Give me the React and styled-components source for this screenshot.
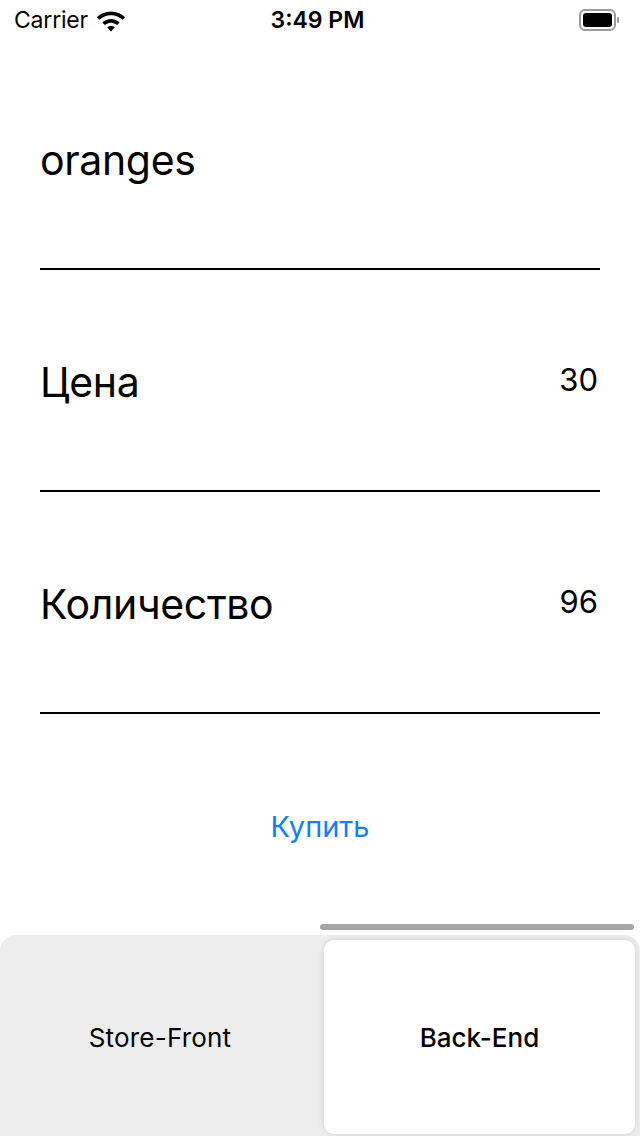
import React, { useState } from "react";
import styled, { createGlobalStyle } from "styled-components";

const GlobalStyle = createGlobalStyle`
  html, body {
    margin: 0;
    padding: 0;
    background: #ffffff;
  }
  body {
    font-family: Inter, "Noto Sans", "Liberation Sans", sans-serif;
    color: #000;
  }
`;

const Screen = styled.div`
  width: 640px;
  height: 1136px;
  display: flex;
  flex-direction: column;
  background: #fff;
  overflow: hidden;
`;

const StatusBar = styled.div`
  height: 40px;
  display: grid;
  grid-template-columns: 1fr auto 1fr;
  align-items: center;
  padding: 0 19px 0 14px;
  font-size: 23px;
`;

const Carrier = styled.div`
  display: flex;
  align-items: center;
  gap: 7px;
  letter-spacing: -0.2px;
`;

const Clock = styled.div`
  font-weight: 600;
`;

const BatteryWrap = styled.div`
  justify-self: end;
  display: flex;
  align-items: center;
`;

const Form = styled.div`
  padding: 8px 40px 0;
  display: flex;
  flex-direction: column;
`;

const Row = styled.div`
  height: 222px;
  border-bottom: 2px solid #000;
  display: flex;
  align-items: center;
  justify-content: space-between;
  padding: 3px 2px 0 0;
  box-sizing: border-box;
`;

const Label = styled.div`
  font-size: 41px;
  letter-spacing: -0.35px;
`;

const Value = styled.div`
  font-size: 31px;
  margin-top: -4px;
`;

const BuyWrap = styled.div`
  margin-top: 90px;
  height: 44px;
  display: flex;
  justify-content: center;
  align-items: center;
`;

const BuyButton = styled.button`
  border: none;
  background: none;
  font-family: inherit;
  font-size: 29px;
  color: #147efb;
  padding: 0 10px;
  cursor: pointer;
`;

const TabArea = styled.div`
  margin-top: auto;
  display: flex;
  flex-direction: column;
  gap: 5px;
`;

const IndicatorTrack = styled.div`
  height: 6px;
  padding: 0 6px 0 320px;
`;

const Indicator = styled.div`
  height: 100%;
  border-radius: 3px;
  background: #a6a6a6;
`;

const TabBar = styled.div`
  height: 201px;
  box-sizing: border-box;
  background: #ededed;
  border-radius: 16px 16px 0 0;
  display: grid;
  grid-template-columns: 320px 1fr;
  column-gap: 4px;
  padding: 5px 5px 2px 0;
`;

const Tab = styled.button`
  border: none;
  font-family: inherit;
  font-size: 26px;
  color: #000;
  display: flex;
  align-items: center;
  justify-content: center;
  padding: 0;
  cursor: pointer;
  letter-spacing: ${(p) => (p.$active ? "0px" : "0.2px")};
  background: ${(p) => (p.$active ? "#fff" : "transparent")};
  font-weight: ${(p) => (p.$active ? 500 : 400)};
  border-radius: ${(p) => (p.$active ? "10px" : "0")};
  box-shadow: ${(p) =>
    p.$active ? "0 0 6px rgba(0, 0, 0, 0.12)" : "none"};
`;

function Wifi() {
  return (
    <svg width="32" height="24" viewBox="0 0 24 18">
      <path
        d="M12 2.6C7.9 2.6 4.2 4.2 1.4 6.9l1.9 2C5.6 6.8 8.6 5.5 12 5.5s6.4 1.3 8.7 3.4l1.9-2C19.8 4.2 16.1 2.6 12 2.6z"
        fill="#000"
      />
      <path
        d="M12 8.2c-2.5 0-4.8 1-6.5 2.6l1.9 2c1.2-1.1 2.8-1.8 4.6-1.8s3.4.7 4.6 1.8l1.9-2C16.8 9.2 14.5 8.2 12 8.2z"
        fill="#000"
      />
      <path d="M12 13.5c-1.1 0-2.1.4-2.8 1.1L12 17.6l2.8-3C14.1 13.9 13.1 13.5 12 13.5z" fill="#000" />
    </svg>
  );
}

function Battery() {
  return (
    <svg width="42" height="24" viewBox="0 0 42 24">
      <rect x="1" y="2" width="35" height="20" rx="5" fill="none" stroke="#9a9a9a" strokeWidth="2" />
      <rect x="4" y="5" width="29" height="14" rx="3" fill="#000" />
      <rect x="38" y="9" width="2" height="6" rx="1" fill="#9a9a9a" />
    </svg>
  );
}

const fields = [
  { label: "Цена", value: "30" },
  { label: "Количество", value: "96" },
];

export default function App() {
  const [tab, setTab] = useState("back");

  return (
    <Screen>
      <GlobalStyle />
      <StatusBar>
        <Carrier>
          Carrier
          <Wifi />
        </Carrier>
        <Clock>3:49 PM</Clock>
        <BatteryWrap>
          <Battery />
        </BatteryWrap>
      </StatusBar>

      <Form>
        <Row>
          <Label>oranges</Label>
        </Row>
        {fields.map((f) => (
          <Row key={f.label}>
            <Label>{f.label}</Label>
            <Value>{f.value}</Value>
          </Row>
        ))}
      </Form>

      <BuyWrap>
        <BuyButton>Купить</BuyButton>
      </BuyWrap>

      <TabArea>
        <IndicatorTrack>
          <Indicator />
        </IndicatorTrack>
        <TabBar>
          <Tab $active={tab === "front"} onClick={() => setTab("front")}>
            Store-Front
          </Tab>
          <Tab $active={tab === "back"} onClick={() => setTab("back")}>
            Back-End
          </Tab>
        </TabBar>
      </TabArea>
    </Screen>
  );
}
